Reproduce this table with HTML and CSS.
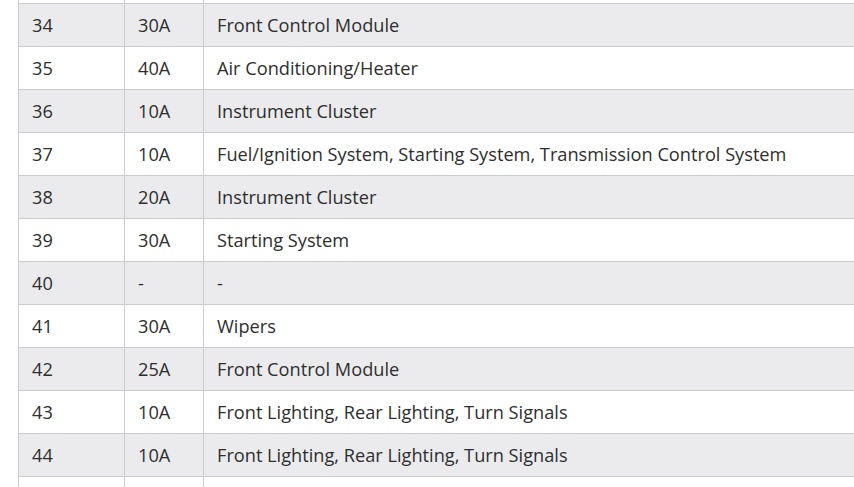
FILE: index.html
```html
<!DOCTYPE html>
<html>
<head>
<meta charset="utf-8">
<link rel="stylesheet" href="styles.css">
</head>
<body>
<div class="wrap">
<table class="fuses">
<tbody>
<tr class="edge"><td></td><td></td><td></td></tr>
<tr><td>34</td><td>30A</td><td>Front Control Module</td></tr>
<tr><td>35</td><td>40A</td><td>Air Conditioning/Heater</td></tr>
<tr><td>36</td><td>10A</td><td>Instrument Cluster</td></tr>
<tr><td>37</td><td>10A</td><td>Fuel/Ignition System, Starting System, Transmission Control System</td></tr>
<tr><td>38</td><td>20A</td><td>Instrument Cluster</td></tr>
<tr><td>39</td><td>30A</td><td>Starting System</td></tr>
<tr><td>40</td><td>-</td><td>-</td></tr>
<tr><td>41</td><td>30A</td><td>Wipers</td></tr>
<tr><td>42</td><td>25A</td><td>Front Control Module</td></tr>
<tr><td>43</td><td>10A</td><td>Front Lighting, Rear Lighting, Turn Signals</td></tr>
<tr><td>44</td><td>10A</td><td>Front Lighting, Rear Lighting, Turn Signals</td></tr>
<tr class="edge"><td></td><td></td><td></td></tr>
</tbody>
</table>
</div>
</body>
</html>
```
FILE: styles.css
```css
html, body {
  margin: 0;
  padding: 0;
  background: #ffffff;
  overflow: hidden;
}
.wrap {
  margin-top: -40px;
  padding-left: 18px;
  width: 900px;
}
.fuses {
  border-collapse: collapse;
  width: 900px;
  font-family: "Open Sans", sans-serif;
  font-size: 18.2px;
  color: #2e2e2e;
}
.fuses td {
  border: 1px solid #cccccc;
  height: 43px;
  padding: 0 13px;
  box-sizing: border-box;
  vertical-align: middle;
  white-space: nowrap;
}
.fuses td:nth-child(1) { width: 106px; }
.fuses td:nth-child(2) { width: 79px; }
.fuses tr:nth-child(even) td { background: #ebebed; }
```
